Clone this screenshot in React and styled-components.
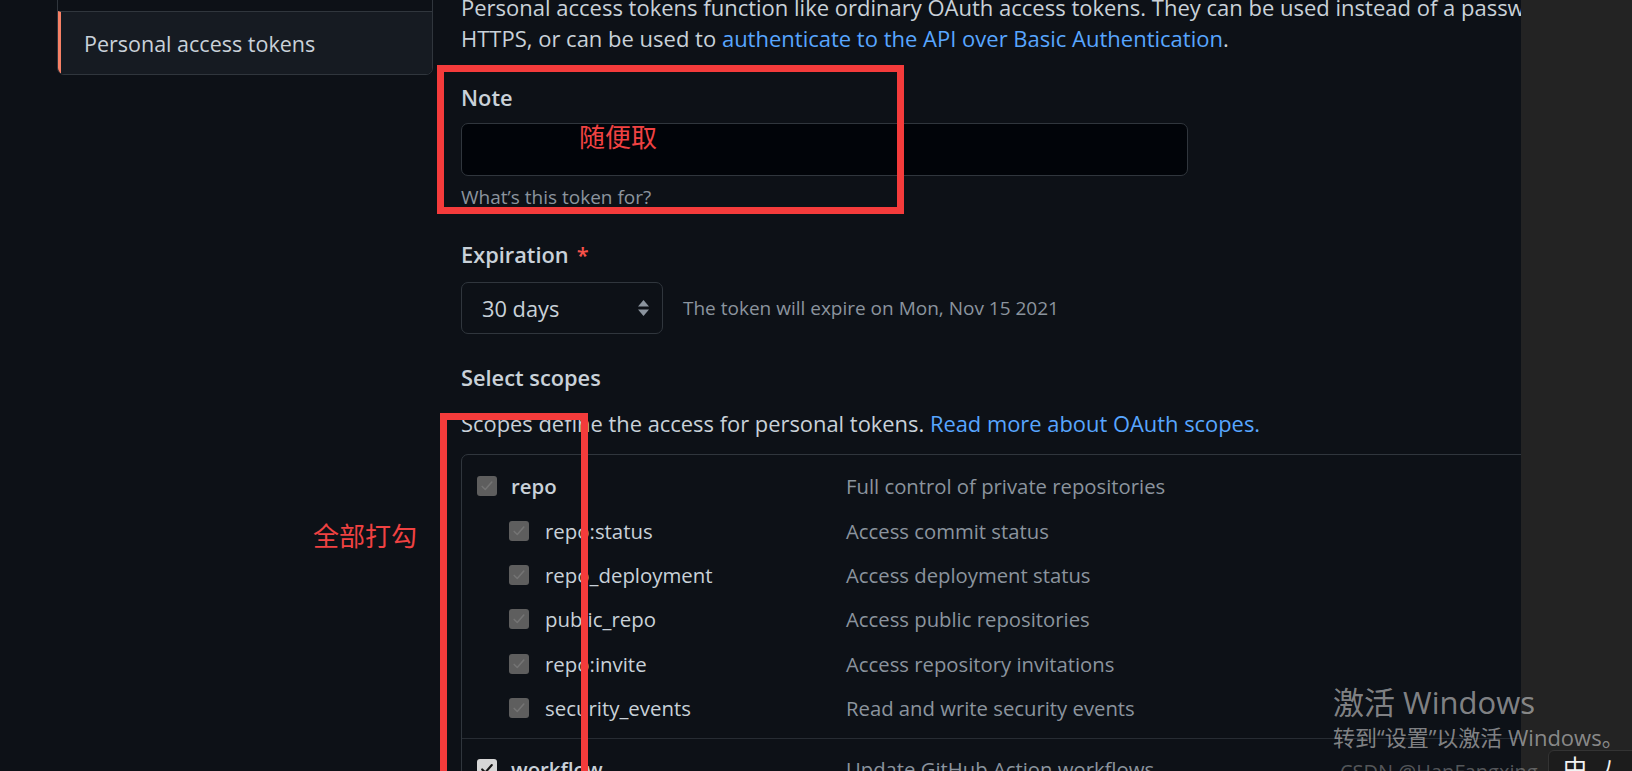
import React from "react";
import styled, { createGlobalStyle } from "styled-components";

const GlobalStyle = createGlobalStyle`
  html, body { margin: 0; padding: 0; background: #0d1117; overflow: hidden; }
  body { font-family: "Open Sans", "Noto Sans CJK SC", sans-serif; color: #c9d1d9; }
  * { box-sizing: border-box; }
`;

const Screen = styled.div`
  position: relative;
  width: 1632px;
  height: 771px;
  overflow: hidden;
  display: flex;
  background: #0d1117;
`;

const Viewport = styled.div`
  width: 1521px;
  flex-shrink: 0;
  height: 100%;
  overflow: hidden;
  display: flex;
  align-items: flex-start;
`;

const Desktop = styled.div`
  flex: 1;
  height: 100%;
  background: #232323;
`;

const Sidebar = styled.nav`
  width: 376px;
  margin-left: 57px;
  margin-top: -53px;
  flex-shrink: 0;
  border: 1px solid #30363d;
  border-radius: 7px;
  overflow: hidden;
`;

const NavItem = styled.div`
  height: 63px;
  display: flex;
  align-items: center;
  padding-left: 23px;
  font-size: 21.5px;
  color: #c9d1d9;
  white-space: nowrap;
  background: ${(p) => (p.$active ? "#161b22" : "#0d1117")};
  border-left: 3px solid ${(p) => (p.$active ? "#f78166" : "transparent")};
  & + & { border-top: 1px solid #30363d; }
`;

const Main = styled.main`
  margin-left: 28px;
  width: 1300px;
  flex-shrink: 0;
`;

const Intro = styled.p`
  margin: -8px 0 0;
  font-size: 22px;
  line-height: 31px;
  white-space: nowrap;
`;

const Link = styled.a`
  color: #58a6ff;
  text-decoration: none;
`;

const Label = styled.div`
  margin-top: ${(p) => p.$mt}px;
  font-size: 21.8px;
  font-weight: 600;
  line-height: 28px;
  color: #c9d1d9;
`;

const Required = styled.span`
  color: #f85149;
  margin-left: 8px;
`;

const TextInput = styled.div`
  margin-top: 11px;
  width: 727px;
  height: 53px;
  background: #010409;
  border: 1px solid #30363d;
  border-radius: 7px;
`;

const Hint = styled.div`
  margin-top: 9px;
  font-size: 19px;
  line-height: 24px;
  color: #8b949e;
`;

const SelectRow = styled.div`
  margin-top: 13px;
  display: flex;
  align-items: center;
  gap: 20px;
`;

const Select = styled.div`
  width: 202px;
  height: 52px;
  border: 1px solid #30363d;
  border-radius: 7px;
  background: #0d1117;
  display: flex;
  align-items: center;
  justify-content: space-between;
  padding: 0 12px 0 20px;
  font-size: 21.8px;
  color: #c9d1d9;
`;

const Muted = styled.span`
  font-size: 19px;
  color: #8b949e;
`;

const Text = styled.div`
  margin-top: ${(p) => p.$mt}px;
  font-size: 21.9px;
  line-height: 31px;
  color: #c9d1d9;
  white-space: nowrap;
`;

const Table = styled.div`
  margin-top: 15px;
  width: 1200px;
  border: 1px solid #30363d;
  border-radius: 7px;
`;

const Group = styled.div`
  padding: ${(p) => p.$pad};
  & + & { border-top: 1px solid #272c33; }
`;

const Row = styled.div`
  height: 44.4px;
  display: flex;
  align-items: center;
`;

const NameCell = styled.div`
  width: 384px;
  flex-shrink: 0;
  display: flex;
  align-items: center;
  gap: ${(p) => (p.$child ? 16 : 14)}px;
  padding-left: ${(p) => (p.$child ? 47 : 15)}px;
  font-size: 20.4px;
  font-weight: ${(p) => (p.$child ? 400 : 600)};
  color: #c9d1d9;
`;

const Desc = styled.div`
  font-size: 20.3px;
  color: #8b949e;
  white-space: nowrap;
`;

const Box = styled.span`
  width: 20px;
  height: 20px;
  border-radius: 3px;
  flex-shrink: 0;
  display: flex;
  align-items: center;
  justify-content: center;
  background: ${(p) => (p.$enabled ? "#d6d6d6" : "#5e5e5e")};
`;

const Overlay = styled.div`
  position: absolute;
  inset: 0;
  pointer-events: none;
`;

const RedBox = styled.div`
  position: absolute;
  left: ${(p) => p.$x}px;
  top: ${(p) => p.$y}px;
  width: ${(p) => p.$w}px;
  height: ${(p) => p.$h}px;
  border: 7px solid #f43b3b;
`;

const RedNote = styled.div`
  position: absolute;
  left: ${(p) => p.$x}px;
  top: ${(p) => p.$y}px;
  font-family: "Noto Sans CJK SC", sans-serif;
  font-size: 26px;
  line-height: 1;
  color: #f04242;
`;

const Watermark = styled.div`
  position: absolute;
  left: 1333px;
  top: 684px;
  width: 299px;
  white-space: nowrap;
  font-family: "Open Sans", "Noto Sans CJK SC", sans-serif;
  color: rgba(205, 205, 205, 0.62);
`;

const WmTitle = styled.div`
  font-size: 31px;
  line-height: 36px;
`;

const WmSub = styled.div`
  font-size: 22px;
  line-height: 28px;
  margin-top: 3px;
`;

const Csdn = styled.div`
  position: absolute;
  left: 1340px;
  top: 760px;
  font-size: 20px;
  line-height: 24px;
  color: rgba(220, 220, 220, 0.35);
`;

const Tray = styled.div`
  position: absolute;
  left: 1548px;
  top: 750px;
  width: 100px;
  height: 40px;
  background: #1c1c1c;
  border: 1px solid #333;
  border-radius: 6px;
  display: flex;
  align-items: flex-start;
  gap: 14px;
  padding: 2px 0 0 14px;
  font-family: "Noto Sans CJK SC", sans-serif;
  font-size: 24px;
  line-height: 28px;
  color: #f2f2f2;
`;

function Check({ enabled }) {
  return (
    <Box $enabled={enabled}>
      <svg width="14" height="14" viewBox="0 0 16 16">
        <path
          d="M2.5 8.5 L6 12 L13.5 3.5"
          fill="none"
          stroke={enabled ? "#161616" : "#747474"}
          strokeWidth={enabled ? 2.4 : 1.8}
          strokeLinecap="round"
          strokeLinejoin="round"
        />
      </svg>
    </Box>
  );
}

function SelectArrows() {
  return (
    <svg width="13" height="18" viewBox="0 0 13 18">
      <path d="M6.5 1 L12 7.5 L1 7.5 Z" fill="#8b949e" />
      <path d="M6.5 17 L12 10.5 L1 10.5 Z" fill="#8b949e" />
    </svg>
  );
}

const repoScopes = [
  ["repo:status", "Access commit status"],
  ["repo_deployment", "Access deployment status"],
  ["public_repo", "Access public repositories"],
  ["repo:invite", "Access repository invitations"],
  ["security_events", "Read and write security events"],
];

export default function App() {
  return (
    <>
      <GlobalStyle />
      <Screen>
        <Viewport>
          <Sidebar>
            <NavItem>OAuth Apps</NavItem>
            <NavItem $active>Personal access tokens</NavItem>
          </Sidebar>
          <Main>
            <Intro>
              Personal access tokens function like ordinary OAuth access tokens. They can be used instead of a password for Git over
              <br />
              HTTPS, or can be used to <Link>authenticate to the API over Basic Authentication</Link>.
            </Intro>
            <Label $mt={30}>Note</Label>
            <TextInput />
            <Hint>What’s this token for?</Hint>
            <Label $mt={32}>
              Expiration<Required>*</Required>
            </Label>
            <SelectRow>
              <Select>
                <span>30 days</span>
                <SelectArrows />
              </Select>
              <Muted>The token will expire on Mon, Nov 15 2021</Muted>
            </SelectRow>
            <Label $mt={30}>Select scopes</Label>
            <Text $mt={16}>
              Scopes define the access for personal tokens. <Link>Read more about OAuth scopes.</Link>
            </Text>
            <Table>
              <Group $pad="9px 0 8px">
                <Row>
                  <NameCell>
                    <Check />
                    repo
                  </NameCell>
                  <Desc>Full control of private repositories</Desc>
                </Row>
                {repoScopes.map(([name, desc]) => (
                  <Row key={name}>
                    <NameCell $child>
                      <Check />
                      {name}
                    </NameCell>
                    <Desc>{desc}</Desc>
                  </Row>
                ))}
              </Group>
              <Group $pad="7px 0 8px">
                <Row>
                  <NameCell>
                    <Check enabled />
                    workflow
                  </NameCell>
                  <Desc>Update GitHub Action workflows</Desc>
                </Row>
              </Group>
            </Table>
          </Main>
        </Viewport>
        <Desktop />
        <Overlay>
          <RedBox $x={437} $y={65} $w={467} $h={149} />
          <RedBox $x={440} $y={413} $w={148} $h={420} />
          <RedNote $x={579} $y={123}>随便取</RedNote>
          <RedNote $x={313} $y={522}>全部打勾</RedNote>
          <Watermark>
            <WmTitle>激活 Windows</WmTitle>
            <WmSub>转到“设置”以激活 Windows。</WmSub>
          </Watermark>
          <Csdn>CSDN @HanFangxing</Csdn>
          <Tray>
            <span>中</span>
            <span>ﾉ</span>
          </Tray>
        </Overlay>
      </Screen>
    </>
  );
}
